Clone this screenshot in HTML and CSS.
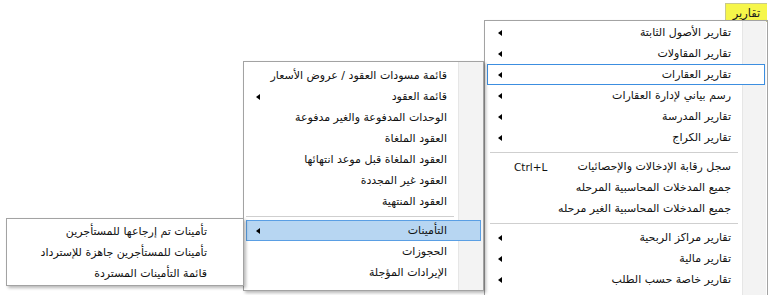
FILE: index.html
```html
<!DOCTYPE html>
<html lang="ar">
<head>
<meta charset="utf-8">
<title>تقارير</title>
<link rel="stylesheet" href="styles.css">
</head>
<body>
<div class="menubar">
  <div class="menubar-item">تقارير</div>
</div>

<div class="menu menu-main" dir="rtl">
  <div class="item"><span class="label">تقارير الأصول الثابتة</span><span class="arrow"></span></div>
  <div class="item"><span class="label">تقارير المقاولات</span><span class="arrow"></span></div>
  <div class="item item-open"><span class="label">تقارير العقارات</span><span class="arrow"></span></div>
  <div class="item"><span class="label">رسم بياني لإدارة العقارات</span><span class="arrow"></span></div>
  <div class="item"><span class="label">تقارير المدرسة</span><span class="arrow"></span></div>
  <div class="item"><span class="label">تقارير الكراج</span><span class="arrow"></span></div>
  <div class="sep"></div>
  <div class="item"><span class="label">سجل رقابة الإدخالات والإحصائيات</span><span class="shortcut" dir="ltr">Ctrl+L</span></div>
  <div class="item"><span class="label">جميع المدخلات المحاسبية المرحله</span></div>
  <div class="item"><span class="label">جميع المدخلات المحاسبية الغير مرحله</span></div>
  <div class="sep"></div>
  <div class="item"><span class="label">تقارير مراكز الربحية</span><span class="arrow"></span></div>
  <div class="item"><span class="label">تقارير مالية</span><span class="arrow"></span></div>
  <div class="item"><span class="label">تقارير خاصة حسب الطلب</span><span class="arrow"></span></div>
</div>

<div class="menu menu-sub" dir="rtl">
  <div class="item"><span class="label">قائمة مسودات العقود / عروض الأسعار</span></div>
  <div class="item"><span class="label">قائمة العقود</span><span class="arrow"></span></div>
  <div class="item"><span class="label">الوحدات المدفوعة والغير مدفوعة</span></div>
  <div class="item"><span class="label">العقود الملغاة</span></div>
  <div class="item"><span class="label">العقود الملغاة قبل موعد انتهائها</span></div>
  <div class="item"><span class="label">العقود غير المجددة</span></div>
  <div class="item"><span class="label">العقود المنتهية</span></div>
  <div class="sep"></div>
  <div class="item item-hot"><span class="label">التأمينات</span><span class="arrow"></span></div>
  <div class="item"><span class="label">الحجوزات</span></div>
  <div class="item"><span class="label">الإيرادات المؤجلة</span></div>
</div>

<div class="menu menu-third" dir="rtl">
  <div class="item"><span class="label">تأمينات تم إرجاعها للمستأجرين</span></div>
  <div class="item"><span class="label">تأمينات للمستأجرين جاهزة للإسترداد</span></div>
  <div class="item"><span class="label">قائمة التأمينات المستردة</span></div>
</div>
</body>
</html>
```

FILE: styles.css
```css
* { box-sizing: border-box; }

html, body {
  margin: 0;
  padding: 0;
}

body {
  width: 768px;
  height: 295px;
  overflow: hidden;
  position: relative;
  background: #ffffff;
  font-family: "DejaVu Sans", "Noto Sans", sans-serif;
  font-size: 11px;
  color: #111111;
}

.menubar {
  display: flex;
  justify-content: flex-end;
  padding: 3px 1px 0 0;
}

.menubar-item {
  width: 42px;
  height: 19px;
  background: #f6f64a;
  border: 1px solid #c9c98c;
  border-right: none;
  display: flex;
  align-items: center;
  justify-content: center;
  font-size: 11.5px;
  color: #1a1a1a;
}

.menu {
  position: absolute;
  display: flex;
  flex-direction: column;
  border: 1px solid #a3a3a3;
  box-shadow: 2px 2px 3px rgba(0, 0, 0, 0.28);
}

.menu-main {
  left: 484px;
  top: 20px;
  width: 284px;
  height: 280px;
  padding: 1px 2px;
  background: linear-gradient(to left, transparent 1px, #f3f3f3 1px, #f3f3f3 24px, #e6e6e6 24px, #e6e6e6 25px, #ffffff 25px);
  z-index: 1;
}

.menu-sub {
  left: 243px;
  top: 61px;
  width: 241px;
  height: 230px;
  padding: 3px 2px 2px;
  background: linear-gradient(to left, #f3f3f3 0, #f3f3f3 24px, #e6e6e6 24px, #e6e6e6 25px, #ffffff 25px);
  z-index: 2;
}

.menu-third {
  left: 6px;
  top: 218px;
  width: 238px;
  height: 68px;
  padding: 2px 2px 2px;
  background: #ffffff;
  z-index: 3;
}

.item {
  height: 21px;
  display: flex;
  align-items: center;
  padding-right: 33px;
  border: 1px solid transparent;
  flex: none;
}

.label {
  white-space: nowrap;
}

.arrow {
  margin-right: auto;
  margin-left: 10px;
  width: 0;
  height: 0;
  border-top: 3.5px solid transparent;
  border-bottom: 3.5px solid transparent;
  border-right: 4px solid #000000;
}

.menu-sub .arrow {
  margin-left: 9px;
}

.shortcut {
  margin-right: auto;
  margin-left: 26px;
  font-family: "DejaVu Sans", sans-serif;
  font-size: 10.5px;
}

.item-open {
  border-color: #3c8ee0;
  background: #ffffff;
}

.item-hot {
  border-color: #5a9fe4;
  background: #b7d6f2;
}

.sep {
  flex: none;
  height: 8px;
  display: flex;
  align-items: center;
}

.sep::before {
  content: "";
  display: block;
  width: 100%;
  border-top: 1px solid #cfcfcf;
}

.menu-main .sep {
  padding: 0 27px 0 3px;
}

.menu-sub .sep {
  padding: 0 27px 0 0;
}
```
